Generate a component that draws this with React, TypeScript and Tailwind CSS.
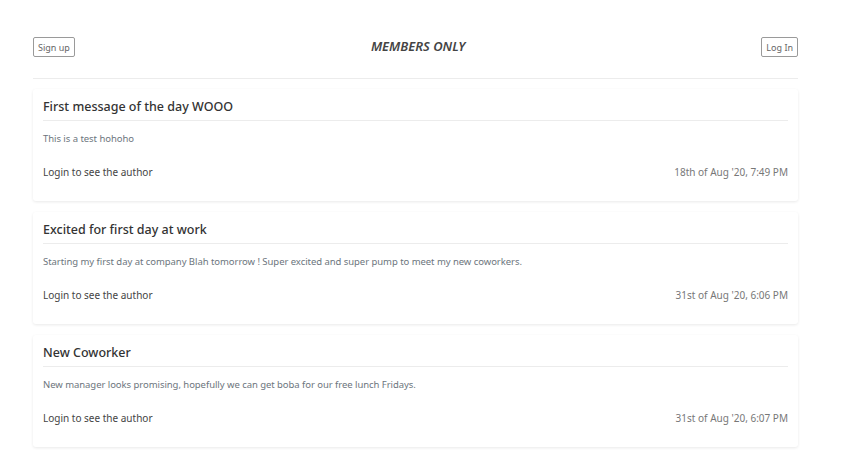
const posts = [
  {
    title: 'First message of the day WOOO',
    body: 'This is a test hohoho',
    date: "18th of Aug '20, 7:49 PM",
  },
  {
    title: 'Excited for first day at work',
    body: 'Starting my first day at company Blah tomorrow ! Super excited and super pump to meet my new coworkers.',
    date: "31st of Aug '20, 6:06 PM",
  },
  {
    title: 'New Coworker',
    body: 'New manager looks promising, hopefully we can get boba for our free lunch Fridays.',
    date: "31st of Aug '20, 6:07 PM",
  },
]

export default function App() {
  return (
    <div className="min-h-screen bg-white font-['Noto_Sans',sans-serif] text-[#333]">
      <div className="mx-[33px] w-[765px] pt-[37px]">
        <header className="flex items-start justify-between border-b border-[#ececec] pb-[21px]">
          <button className="h-[20px] rounded-[2px] border border-[#9a9a9a] px-[4px] text-[9px] leading-none text-[#666]">
            Sign up
          </button>
          <h1 className="mt-[2px] text-[13px] font-semibold italic leading-[14px] text-[#444]">MEMBERS ONLY</h1>
          <button className="h-[20px] rounded-[2px] border border-[#9a9a9a] px-[4px] text-[9px] leading-none text-[#666]">
            Log In
          </button>
        </header>

        <div className="flex flex-col gap-[11px] pt-[10px]">
          {posts.map((post) => (
            <div
              key={post.title}
              className="h-[112px] rounded-[3px] bg-white px-[10px] pt-[10px] shadow-[0_1px_3px_rgba(0,0,0,0.09)]"
            >
              <h2 className="border-b border-[#ececec] pb-[5px] text-[12.5px] font-medium leading-[16px] text-[#333]">
                {post.title}
              </h2>
              <p className="mt-[12px] text-[9.5px] tracking-[-0.05px] leading-[12px] text-[#6c757d]">{post.body}</p>
              <div className="mt-[21px] flex justify-between text-[10px] leading-[12px]">
                <span className="text-[#444]">Login to see the author</span>
                <span className="text-[#777]">{post.date}</span>
              </div>
            </div>
          ))}
        </div>
      </div>
    </div>
  )
}
